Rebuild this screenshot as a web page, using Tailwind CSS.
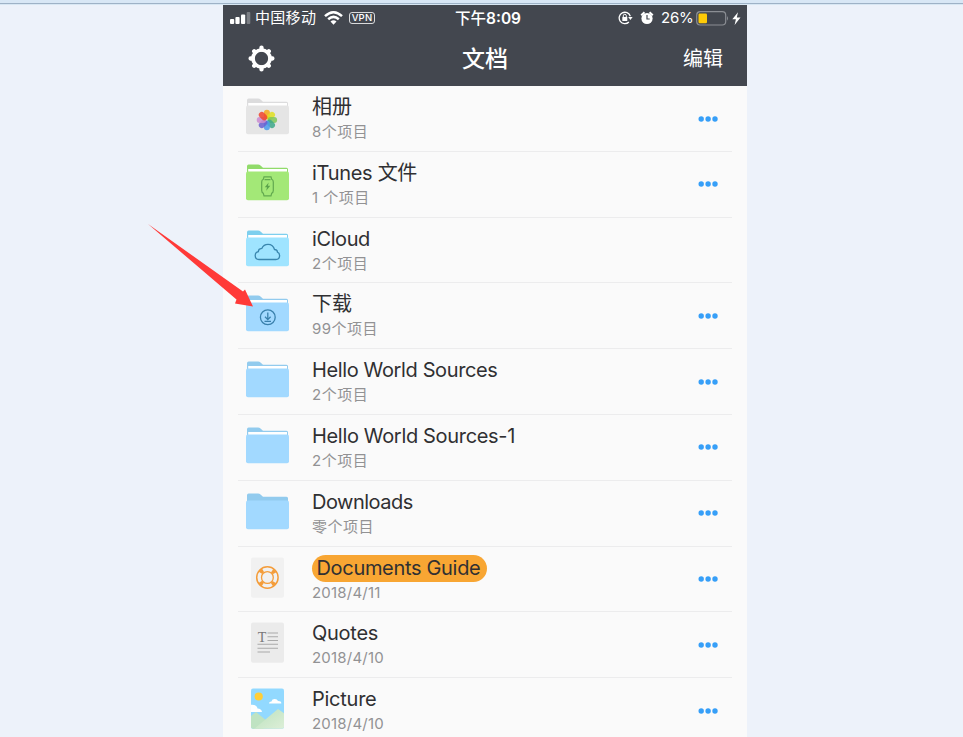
<!DOCTYPE html>
<html lang="zh-CN">
<head>
<meta charset="utf-8">
<title>文档</title>
<script src="https://cdn.jsdelivr.net/npm/@tailwindcss/browser@4"></script>
</head>
<body class="h-[737px] w-[963px] overflow-hidden bg-[#edf2fa] font-['Inter','Noto_Sans_CJK_SC',sans-serif]">
<svg class="hidden">
  <symbol id="folder" viewBox="0 0 43 37">
    <path d="M1 11V2.200Q1 .6 2.600.6H12Q13.500.6 14.500 1.500L17 3.700H40.500Q42 3.700 42 5.200V11Z" fill="currentColor"/>
  </symbol>
  <symbol id="dots" viewBox="0 0 20 6"><g fill="#369ff8"><circle cx="3.200" cy="3" r="2.700"/><circle cx="10.100" cy="3" r="2.700"/><circle cx="17" cy="3" r="2.700"/></g></symbol>
</svg>
<div class="h-[3px] bg-[#d8e7f5]"></div>
<div class="h-px bg-[#9eb2c6]"></div>
<div class="h-px bg-[#d8e7f3]"></div>
<main class="ml-[223px] h-[732px] w-[524px] overflow-hidden bg-[#fafafa]">
  <header class="h-[81px] bg-[#43474f] text-white">
    <div class="flex h-[26px] items-center pl-[7px] text-[15px] leading-[26px]">
      <svg class="w-[21px] shrink-0" height="12" viewBox="0 0 21 12"><g fill="#fff"><rect x="0" y="7" width="4.200" height="5" rx="1"/><rect x="5.400" y="5" width="4.200" height="7" rx="1"/><rect x="11" y="2.500" width="4.200" height="9.500" rx="1"/><rect x="16.700" y="0" width="3.600" height="12" rx="1" opacity=".3"/></g></svg>
      <span class="ml-[4px] w-[62px] whitespace-nowrap text-[15px] tracking-[0.3px]">中国移动</span>
      <svg class="ml-[7px] shrink-0" width="19" height="14" viewBox="0 0 19 14"><g fill="none" stroke="#fff" stroke-width="2.500"><path d="M1 5.200Q9.500-2.600 18 5.200"/><path d="M4.200 8.300Q9.500 3.500 14.800 8.300"/></g><path d="M6.500 10.500Q9.500 8 12.500 10.500L9.500 13.700Z" fill="#fff"/></svg>
      <span class="ml-[6px] flex h-[12px] w-[26px] items-center justify-center rounded-[3px] border border-white/80 text-[9.500px] font-medium leading-none tracking-[0.2px]">VPN</span>
      <span class="ml-[80px] w-[67px] whitespace-nowrap pt-px text-[15.500px] font-semibold"><span class="font-medium">下午</span>8:09</span>
      <svg class="ml-[96px] shrink-0" width="15" height="14" viewBox="0 0 15 14"><path d="M12.300 5.200A5.700 5.700 0 1 0 10.900 11" fill="none" stroke="#fff" stroke-width="1.300"/><path d="M10.200 6H14.600L12.400 9Z" fill="#fff"/><rect x="4.300" y="6" width="5" height="4" rx=".5" fill="#fff"/><path d="M5.300 6V4.800A1.500 1.500 0 0 1 8.300 4.800V6" fill="none" stroke="#fff"/></svg>
      <svg class="ml-[7px] shrink-0" width="14" height="14" viewBox="0 0 14 14"><circle cx="7" cy="7.500" r="5.600" fill="#fff"/><path d="M1.200 4.300 4.500 1.300M12.800 4.300 9.500 1.300" stroke="#fff" stroke-width="2"/><path d="M7 4V8H9.700" fill="none" stroke="#43474f" stroke-width="1.200"/></svg>
      <span class="ml-[7px] w-[32px] whitespace-nowrap text-[15px] tracking-[-0.200px]">26%</span>
      <svg class="ml-[3px] shrink-0" width="33" height="15" viewBox="0 0 33 15"><rect x=".7" y=".7" width="29" height="13.300" rx="3.500" fill="none" stroke="#8b8e94" stroke-width="1.200"/><rect x="2.500" y="2.500" width="8.500" height="9.700" rx="1.200" fill="#fecb07"/><path d="M31 5Q33 7.300 31 9.700Z" fill="#8b8e94"/></svg>
      <svg class="ml-[3px] shrink-0" width="9" height="13" viewBox="0 0 9 13"><path d="M6 .2.300 7.300H3.900L2.600 12.900 8.500 5.500H4.800Z" fill="#fff"/></svg>
    </div>
    <div class="grid h-[55px] grid-cols-[175px_174px_175px] items-center">
      <svg class="ml-[24.500px]" width="27" height="27" viewBox="-13.500 -13.500 27 27"><circle r="8.500" fill="none" stroke="#fff" stroke-width="3.700"/><g stroke="#fff" stroke-width="4.300" stroke-linecap="round"><path d="M0-9V-10.900M0 9V10.900M-9 0H-10.900M9 0H10.900M6.400 6.400 7.300 7.300M-6.400-6.400-7.300-7.300M-6.400 6.400-7.300 7.300M6.400-6.400 7.300-7.300"/></g></svg>
      <h1 class="text-center text-[23px] font-medium leading-[30px]">文档</h1>
      <span class="mr-[24px] text-right text-[20px] leading-[30px]">编辑</span>
    </div>
  </header>
  <ul id="files"></ul>
</main>
<svg class="absolute left-[144px] top-[220px]" width="112" height="92" viewBox="144 220 112 92"><path d="M148 224 243 291.500 245 289.500 253 306.500 235 303.500 236.500 299.500Z" fill="#ff3a38"/></svg>
<script>
const folder = (tab, body, inner = '', paper = true) => `<svg class="mt-[12px] h-[37px] w-[43px]" viewBox="0 0 43 37"><g style="color:${tab}"><use href="#folder" width="43" height="37"/></g>${paper ? '<rect x="2.200" y="5" width="38.800" height="5" fill="#fff"/>' : ''}<rect x="0" y="7.500" width="43" height="28.800" rx="2" fill="${body}"/>${inner}</svg>`;
const doc = (bg, inner) => `<svg class="ml-[5px] mt-[10px] h-[41px] w-[33px]" viewBox="0 0 33 41"><defs><clipPath id="sheet"><rect y=".5" width="33" height="40.300" rx="2"/></clipPath><linearGradient id="hill" x1="0" y1="0" x2="1" y2="1"><stop stop-color="#b9e1bd"/><stop offset="1" stop-color="#deefd8"/></linearGradient></defs><rect y=".5" width="33" height="40.300" rx="2" fill="${bg}"/>${inner}</svg>`;
const petals = ['#f5a81c','#dfe021','#7fc65a','#3ea88a','#4b9bea','#6a5fd0','#c98bd0','#f0462e'].map((c, i) =>
  `<rect x="-3" y="-10.200" width="6" height="9.500" rx="3" fill="${c}" opacity=".86" transform="rotate(${i * 45})"/>`).join('');
const photos = `<g transform="translate(20.900 22)">${petals}</g>`;
const watch = '<g fill="none" stroke="#62a94f" stroke-width="1.200"><path d="M17.300 15.300 18 12.800H25L25.700 15.300Q27.300 16 27.300 18V26.500Q27.300 28.500 25.700 29.200L25 31.800H18L17.300 29.200Q15.700 28.500 15.700 26.500V18Q15.700 16 17.300 15.300ZM18.500 15.600H24.500"/></g><path d="M22.700 18.500 18.800 23.200H21L20.200 26.800 24.300 21.800H21.900Z" fill="#5ba34b"/>';
const cloud = '<path d="M13 29.500Q9.200 29.300 9.200 25.400 9.200 22.200 12.400 21.600 12.200 18.800 15.800 18.400 17.600 14.300 22 14.300 27.200 14.300 28.500 19.500 31.400 19.700 31.500 22.200 33.600 23 33.600 25.700 33.600 29.300 29.800 29.500Z" fill="none" stroke="#3986ae" stroke-width="1.300"/>';
const down = '<g fill="none" stroke="#3980ac" stroke-width="1.300"><circle cx="21.800" cy="22.200" r="7.400"/><path d="M21.800 17.500V24.500M19 21.800 21.800 24.600 24.600 21.800M18.500 26.300H25"/></g>';
const buoy = '<g fill="none" stroke="#f49d3b"><circle cx="16.400" cy="20.500" r="10.700" stroke-width="1.500"/><circle cx="16.400" cy="20.500" r="5.900" stroke-width="1.300"/><circle cx="16.400" cy="20.500" r="8.300" stroke-width="4.200" stroke-dasharray="3.500 9.540" stroke-dashoffset="-4.770"/></g>';
const quote = '<text x="6.700" y="19.800" font-family="Liberation Serif, serif" font-size="14" fill="#777">T</text><path d="M16.500 11H27M16.500 14.700H27M16.500 18.500H27M6.500 22.300H27M6.500 26.200H27M6.500 30H19" stroke="#aaa" stroke-width="1.100"/>';
const picture = '<g clip-path="url(#sheet)"><circle cx="7.700" cy="8.500" r="4.100" fill="#ffce37"/><path d="M18 15.500Q18 13.300 20.500 13.400 21 10.900 23.800 11 26.300 11 27 13.100 30.500 13 30.300 15.500ZM-3 24V19Q-1 16 3 17 6 17.500 6.500 20.500 10.500 20.500 11 24Z" fill="#fff"/><path d="M0 28 5 24 16 33 12 42H0Z" fill="#bfe3c2"/><path d="M3 41 27 21 34 26V41Z" fill="url(#hill)"/></g>';
const blue = ['#92cbee', '#a2d9ff'];
const rows = [
  [folder('#dcdcdd', '#e5e5e5', photos), '相册', '8个项目', 1, 'tracking-normal'],
  [folder('#91db6a', '#a3e877', watch), 'iTunes 文件', '1 个项目', 1, 'tracking-[-0.300px]'],
  [folder('#7dcfee', '#9fe4ff', cloud), 'iCloud', '2个项目', 0, 'tracking-[-0.400px]'],
  [folder(...blue, down), '下载', '99个项目', 1, 'tracking-normal'],
  [folder(...blue), 'Hello World Sources', '2个项目', 1, 'tracking-[-0.370px]'],
  [folder(...blue), 'Hello World Sources-1', '2个项目', 1, 'tracking-[-0.330px]'],
  [folder(...blue, '', false), 'Downloads', '零个项目', 1, 'tracking-[-0.500px]'],
  [doc('#f1f1f1', buoy), 'Documents Guide', '2018/4/11', 1, 'tracking-[-0.320px]'],
  [doc('#ebebeb', quote), 'Quotes', '2018/4/10', 1, 'tracking-[-0.250px]'],
  [doc('#92d9ff', picture), 'Picture', '2018/4/10', 1, 'tracking-[-0.250px]']
];
document.getElementById('files').innerHTML = rows.map(([icon, name, info, more, tracking]) => `
<li class="ml-[15px] flex h-[65.800px] w-[494px] border-b border-[#ececed] pl-[8px]">
  <div class="w-[43px] shrink-0">${icon}</div>
  <div class="ml-[23px] grow pt-[8px]">
    <div class="h-[26px] whitespace-nowrap text-[20px] leading-[26px] text-[#303032] ${tracking}">${name === 'Documents Guide' ? `<span class="-ml-[0.500px] inline-block h-[27px] w-[175px] rounded-full bg-[#f8a633] pl-[5px]">${name}</span>` : name}</div>
    <div class="mt-[2px] h-[20px] whitespace-nowrap text-[15px] leading-[20px] text-[#929294] ${info.startsWith('2018') ? 'tracking-[0.200px]' : 'tracking-[0.500px]'}">${info}</div>
  </div>
  ${more ? '<svg class="mr-[14px] mt-[29.500px] h-[6px] w-[20px]"><use href="#dots" width="20" height="6"/></svg>' : ''}
</li>`).join('');
</script>
</body>
</html>
